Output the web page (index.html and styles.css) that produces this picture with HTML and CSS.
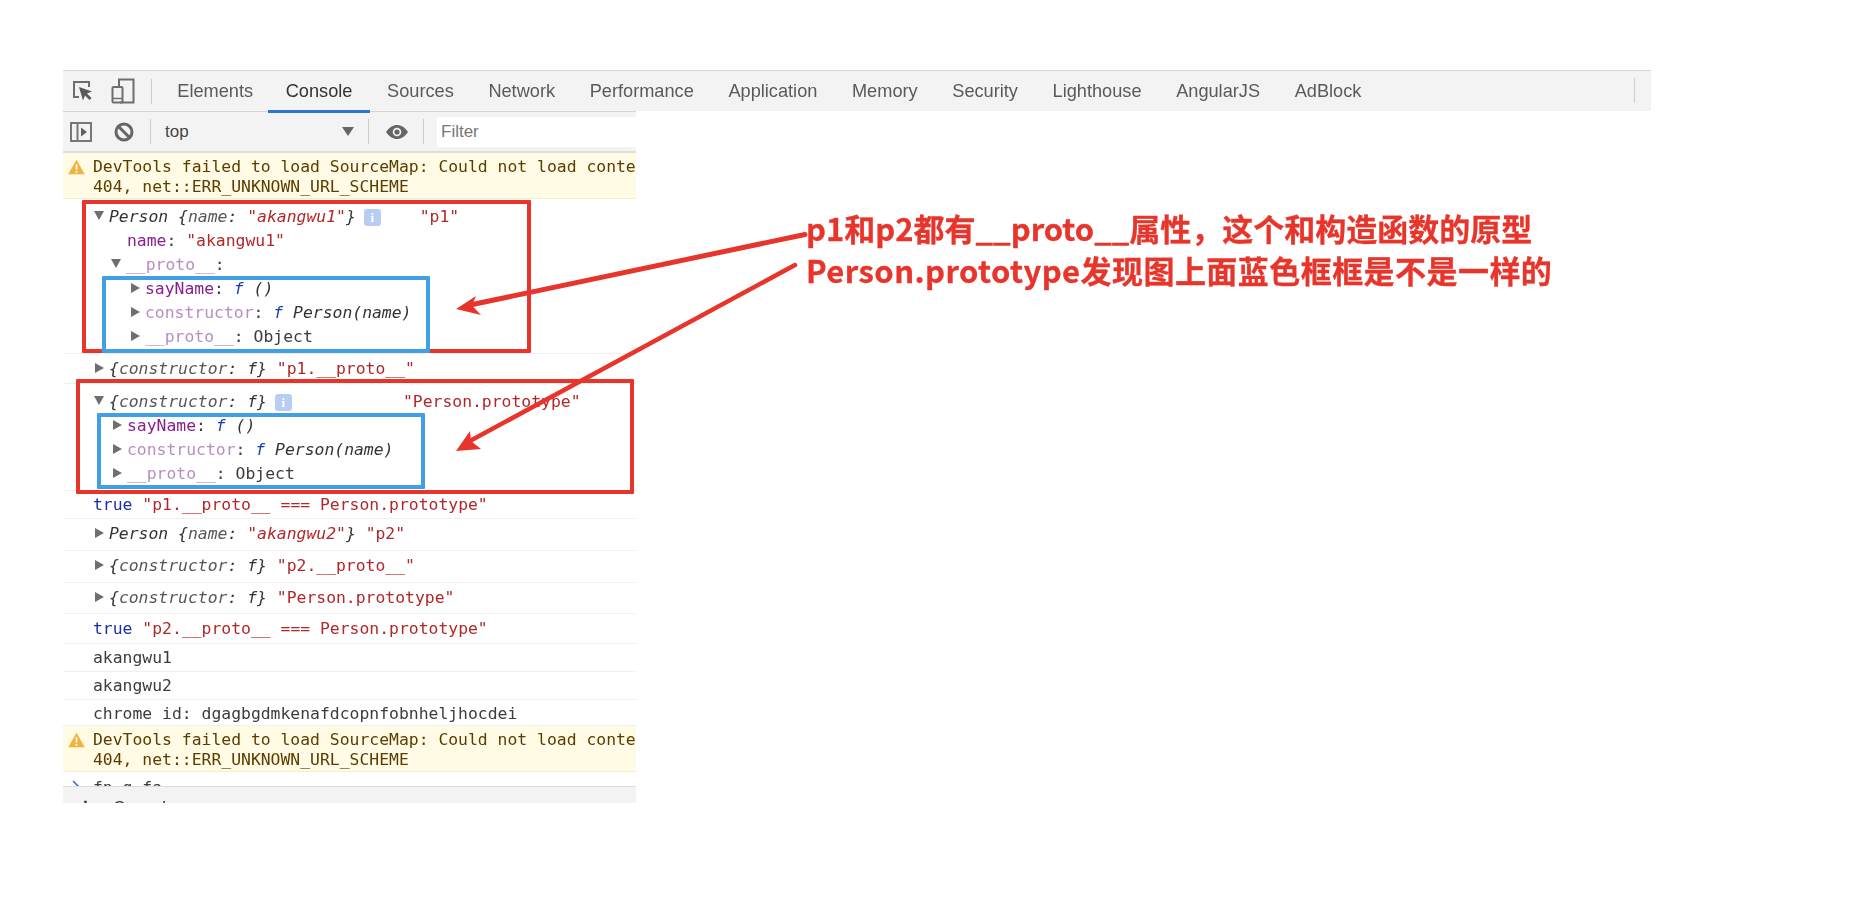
FILE: index.html
```html
<!DOCTYPE html>
<html lang="zh">
<head>
<meta charset="utf-8">
<title>DevTools Console</title>
<link rel="stylesheet" href="styles.css">
</head>
<body>
<div class="stage">
  <div class="devtools">
    <div class="tabbar">
      <div class="tool-icons">
        <svg class="ic-inspect" width="22" height="22" viewBox="0 0 22 22"><path d="M7 17H2V2h15v5" fill="none" stroke="#6e6e6e" stroke-width="2"/><path d="M7 7l13 4.500-5 2 4.500 4.500-2 2-4.500-4.500-2 5z" fill="#5a5a5a"/></svg>
        <svg class="ic-device" width="24" height="26" viewBox="0 0 24 26"><path d="M8 8V1.500h14.500v23H9" fill="none" stroke="#6e6e6e" stroke-width="2"/><rect x="1.500" y="9" width="10" height="15.500" rx="1" fill="none" stroke="#6e6e6e" stroke-width="2"/><path d="M2 20.500h9" stroke="#6e6e6e" stroke-width="1.500"/></svg>
        <span class="vsep"></span>
      </div>
      <div class="tab first">Elements</div>
      <div class="tab active">Console</div>
      <div class="tab">Sources</div>
      <div class="tab">Network</div>
      <div class="tab">Performance</div>
      <div class="tab">Application</div>
      <div class="tab">Memory</div>
      <div class="tab">Security</div>
      <div class="tab">Lighthouse</div>
      <div class="tab">AngularJS</div>
      <div class="tab">AdBlock</div>
      <span class="vsep end"></span>
    </div>
    <div class="console">
      <div class="toolbar">
        <svg class="ic-dock" width="22" height="20" viewBox="0 0 22 20"><rect x="1" y="1" width="20" height="18" fill="none" stroke="#777" stroke-width="2"/><path d="M7.500 1v18" stroke="#777" stroke-width="2"/><path d="M11 5.500l6 4.500-6 4.500z" fill="#5f5f5f"/></svg>
        <svg class="ic-clear" width="20" height="20" viewBox="0 0 20 20"><circle cx="10" cy="10" r="8" fill="none" stroke="#666" stroke-width="3"/><path d="M4.500 4.500l11 11" stroke="#666" stroke-width="3"/></svg>
        <span class="vsep"></span>
        <span class="ctx">top</span>
        <span class="drop"></span>
        <span class="vsep"></span>
        <svg class="ic-eye" width="24" height="16" viewBox="0 0 24 16"><path d="M1 8c3-4.500 7-7 11-7s8 2.500 11 7c-3 4.500-7 7-11 7S4 12.500 1 8z" fill="#666"/><circle cx="12" cy="8" r="4.300" fill="#f3f3f3"/><circle cx="12" cy="8" r="2.600" fill="#666"/></svg>
        <span class="vsep"></span>
        <div class="filter">Filter</div>
      </div>

      <div class="warn">
        <svg class="tri" width="17" height="16" viewBox="0 0 15 14"><path d="M7.500 0.500L14.800 13.500H0.200z" fill="#f2b33d"/><path d="M6.800 4.500h1.400v5h-1.400zM6.800 10.500h1.400v1.500h-1.400z" fill="#fff"/></svg>
        <div class="warn-text">DevTools failed to load SourceMap: Could not load conte<br>404, net::ERR_UNKNOWN_URL_SCHEME</div>
      </div>

      <div class="group g1">
        <div class="ln"><i class="tw down"></i><em class="it">Person {<span class="dim">name</span>: <span class="str">"akangwu1"</span>}</em><b class="info">i</b><span class="str lbl1">"p1"</span></div>
        <div class="ln in1"><span class="key">name</span>: <span class="str">"akangwu1"</span></div>
        <div class="ln in0"><i class="tw down"></i><span class="key2">__proto__</span>:</div>
        <div class="ln in2"><i class="tw"></i><span class="key">sayName</span>: <em class="fn">f</em> <em class="it">()</em></div>
        <div class="ln in2"><i class="tw"></i><span class="key2">constructor</span>: <em class="fn">f</em> <em class="it">Person(name)</em></div>
        <div class="ln in2"><i class="tw"></i><span class="key2">__proto__</span>: Object</div>
      </div>
      <div class="row h30"><i class="tw"></i><em class="it">{<span class="dim">constructor</span>: f}</em> <span class="str">"p1.__proto__"</span></div>
      <div class="group g2">
        <div class="ln"><i class="tw down"></i><em class="it">{<span class="dim">constructor</span>: f}</em><b class="info">i</b><span class="str lbl2">"Person.prototype"</span></div>
        <div class="ln in0"><i class="tw"></i><span class="key">sayName</span>: <em class="fn">f</em> <em class="it">()</em></div>
        <div class="ln in0"><i class="tw"></i><span class="key2">constructor</span>: <em class="fn">f</em> <em class="it">Person(name)</em></div>
        <div class="ln in0"><i class="tw"></i><span class="key2">__proto__</span>: Object</div>
      </div>
      <div class="row h28"><span class="bool">true</span> <span class="str">"p1.__proto__ === Person.prototype"</span></div>
      <div class="row h32"><i class="tw"></i><em class="it">Person {<span class="dim">name</span>: <span class="str">"akangwu2"</span>}</em> <span class="str">"p2"</span></div>
      <div class="row h32"><i class="tw"></i><em class="it">{<span class="dim">constructor</span>: f}</em> <span class="str">"p2.__proto__"</span></div>
      <div class="row h31"><i class="tw"></i><em class="it">{<span class="dim">constructor</span>: f}</em> <span class="str">"Person.prototype"</span></div>
      <div class="row h30"><span class="bool">true</span> <span class="str">"p2.__proto__ === Person.prototype"</span></div>
      <div class="row h28">akangwu1</div>
      <div class="row h28">akangwu2</div>
      <div class="row h26">chrome id: dgagbgdmkenafdcopnfobnheljhocdei</div>
      <div class="warn">
        <svg class="tri" width="17" height="16" viewBox="0 0 15 14"><path d="M7.500 0.500L14.800 13.500H0.200z" fill="#f2b33d"/><path d="M6.800 4.500h1.400v5h-1.400zM6.800 10.500h1.400v1.500h-1.400z" fill="#fff"/></svg>
        <div class="warn-text">DevTools failed to load SourceMap: Could not load conte<br>404, net::ERR_UNKNOWN_URL_SCHEME</div>
      </div>
      <div class="prompt"><svg class="caret" width="8" height="12" viewBox="0 0 8 12"><path d="M1 1l5 5-5 5" fill="none" stroke="#3a6fd8" stroke-width="1.600"/></svg>fn.g.fa</div>
      <div class="drawer"><span class="dots">⋮</span><span class="dtitle">Console</span></div>
    </div>
  </div>

  <div class="box red r1"></div>
  <div class="box blue b1"></div>
  <div class="box red r2"></div>
  <div class="box blue b2"></div>

  <svg class="arrows" width="1872" height="900" viewBox="0 0 1872 900">
    <path d="M805 234.500L470 305" stroke="#e8352c" stroke-width="5" stroke-linecap="round" fill="none"/>
    <path d="M456 309L476 296 472 305.500 481 315z" fill="#e8352c"/>
    <path d="M795 265L468 442" stroke="#e8352c" stroke-width="4.500" stroke-linecap="round" fill="none"/>
    <path d="M456 451L470 431 471 441 481 449z" fill="#e8352c"/>
  </svg>

  <div class="note n1">p1和p2都有__proto__属性，这个和构造函数的原型</div>
  <div class="note n2">Person.prototype发现图上面蓝色框框是不是一样的</div>
</div>
</body>
</html>
```
FILE: styles.css
```css
html, body { margin: 0; padding: 0; background: #fff; }
.stage { position: relative; width: 1872px; height: 900px; overflow: hidden; }
.devtools { padding: 70px 0 0 63px; width: 1588px; filter: blur(.45px); }

.tabbar { display: flex; align-items: center; height: 40px; background: #f3f3f3; border-top: 1px solid #d6d6d6; position: relative; font: 18.2px "Liberation Sans", Arial, sans-serif; color: #5a5a5a; }
.tool-icons { display: flex; align-items: center; width: 97px; flex: none; box-sizing: border-box; padding-left: 9px; }
.ic-inspect { margin-right: 17px; }
.ic-device { margin-right: 16px; }
.vsep { display: block; flex: none; width: 1px; height: 25px; background: #ccc; }
.tab { padding: 0 17.3px; height: 40px; line-height: 40px; flex: none; box-sizing: border-box; }
.tab.first { margin-right: -2px; }
.tab.active { color: #333; border-bottom: 3px solid #2f74d0; height: 42px; margin-bottom: -2px; }
.vsep.end { position: absolute; left: 1571px; top: 7px; }

.console { width: 573px; font: 16.4px/24px "DejaVu Sans Mono", "Liberation Mono", monospace; color: #3c3c3c; height: 692px; overflow: hidden; }
.toolbar { display: flex; align-items: center; height: 42px; box-sizing: border-box; background: #f3f3f3; border-top: 1px solid #d4d4d4; border-bottom: 2px solid #ddd; font: 17px "Liberation Sans", Arial, sans-serif; color: #444; }
.ic-dock { margin-left: 7px; margin-right: 22px; }
.ic-clear { margin-right: 16px; }
.ctx { margin-left: 14px; width: 177px; flex: none; }
.drop { width: 0; height: 0; border: 6px solid transparent; border-top: 9px solid #666; border-bottom: 0; margin-right: 14px; flex: none; }
.ic-eye { margin: 0 14px 0 16px; }
.filter { margin-left: 13px; flex: 1; background: #fff; height: 30px; line-height: 30px; padding-left: 4px; color: #777; }

.warn { display: flex; background: #fffbe5; color: #5c3c00; height: 46px; box-sizing: border-box; padding: 4px 0 0 5px; line-height: 20px; border-bottom: 1px solid #f6efcd; }
.tri { margin: 2px 8px 0 0; flex: none; }
.warn-text { white-space: nowrap; }

.group, .row { border-bottom: 1px solid #f0f0f0; padding-left: 30px; white-space: nowrap; box-sizing: border-box; }
.g1 { height: 155px; padding-top: 6px; }
.g2 { height: 107px; padding-top: 6px; }
.ln { height: 24px; position: relative; }
.in1 { padding-left: 34px; }
.in0 { margin-left: 18px; }
.in2 { margin-left: 36px; }
.row { white-space: pre; }
.h26 { height: 26px; line-height: 27px; }
.h28 { height: 28px; line-height: 27px; }
.h30 { height: 30px; line-height: 29px; }
.h31 { height: 31px; line-height: 30px; }
.h32 { height: 32px; line-height: 30px; }

.tw { display: inline-block; width: 0; height: 0; border-left: 9px solid #6e6e6e; border-top: 5.500px solid transparent; border-bottom: 5.500px solid transparent; margin: 0 5px 0 2px; vertical-align: 1px; }
.tw.down { border-left: 5.500px solid transparent; border-right: 5.500px solid transparent; border-top: 9px solid #6e6e6e; border-bottom: 0; margin: 0 5px 0 0; vertical-align: 2px; }
.row .tw { margin-right: 5px; }
.group > .ln:first-child { margin-left: 1px; }

.it { font-style: italic; color: #333; }
.dim { color: #565656; }
.str { color: #b0282a; }
.key { color: #871f8f; }
.key2 { color: #b98cc4; }
.fn { color: #1a3fb0; font-style: italic; }
.bool { color: #1c2fa0; }
.info { display: inline-block; width: 17px; height: 17px; border-radius: 3px; background: #b9cdf2; color: #fff; font: bold 13px/17px "Liberation Serif", serif; text-align: center; margin-left: 8px; vertical-align: 0; }
.lbl1 { margin-left: 39px; }
.lbl2 { margin-left: 111px; }

.prompt { height: 14px; box-sizing: border-box; padding: 4px 0 0 30px; position: relative; overflow: hidden; }
.caret { position: absolute; left: 9px; top: 8px; }
.drawer { height: 16px; background: #f3f3f3; border-top: 1px solid #ddd; overflow: hidden; font: 17px/30px "Liberation Sans", Arial, sans-serif; color: #333; position: relative; }
.dots { position: absolute; left: 14px; top: 6px; font-weight: bold; }
.dtitle { position: absolute; left: 50px; top: 6px; }

.box { position: absolute; box-sizing: border-box; border-style: solid; border-width: 4px; border-radius: 1px; }
.red { border-color: #e8352c; }
.blue { border-color: #41a0e3; }
.r1 { left: 82px; top: 200px; width: 449px; height: 153px; }
.b1 { left: 102px; top: 276px; width: 328px; height: 77px; }
.r2 { left: 76px; top: 379px; width: 558px; height: 115px; }
.b2 { left: 97px; top: 413px; width: 328px; height: 76px; }
.arrows { position: absolute; left: 0; top: 0; }

.note { position: absolute; left: 806px; font: bold 31px/40px "Noto Sans CJK SC", "Noto Sans", sans-serif; color: #e8352c; white-space: nowrap; -webkit-text-stroke: .3px #e8352c; }
.n1 { top: 208px; }
.n2 { top: 250px; letter-spacing: .45px; }
```
